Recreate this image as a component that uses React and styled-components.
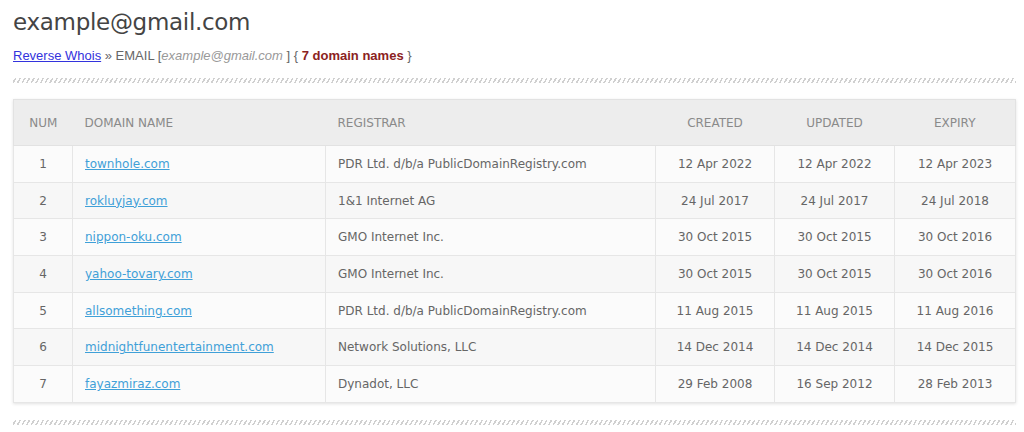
import styled, { createGlobalStyle } from 'styled-components'

const Global = createGlobalStyle`
  body {
    margin: 0;
    background: #ffffff;
    font-family: 'DejaVu Sans', Verdana, sans-serif;
  }
`

const Page = styled.div`
  padding: 7px 8px 0 13px;
  width: 1003px;
`

const Title = styled.h1`
  margin: 0;
  font-family: 'DejaVu Sans', Tahoma, sans-serif;
  font-weight: normal;
  font-size: 23px;
  line-height: 30px;
  color: #444444;
  letter-spacing: -0.3px;
`

const Crumbs = styled.div`
  margin-top: 11px;
  font-family: 'Liberation Sans', Arial, sans-serif;
  font-size: 13px;
  line-height: 16px;
  color: #666666;
`

const CrumbLink = styled.a`
  color: #3333dd;
  text-decoration: underline;
`

const Muted = styled.span`
  font-style: italic;
  color: #999999;
`

const Count = styled.span`
  font-weight: bold;
  color: #8b2222;
`

const Divider = styled.div`
  height: 5px;
  margin: ${p => p.$top}px 0 0;
  background: repeating-linear-gradient(
    -60deg,
    #d0d0d0 0,
    #d0d0d0 1.5px,
    transparent 1.5px,
    transparent 4px
  );
`

const Table = styled.table`
  margin-top: 16px;
  width: 100%;
  border-collapse: collapse;
  font-size: 12px;
  color: #555555;
  box-shadow: 0 1px 3px rgba(0, 0, 0, 0.12);
  border: 1px solid #e2e2e2;
`

const Th = styled.th`
  height: 45px;
  padding: 0 12px;
  background: #ededed;
  font-weight: normal;
  color: #8a8a8a;
  text-align: ${p => p.$align || 'center'};
  border-bottom: 1px solid #e2e2e2;
`

const Row = styled.tr`
  background: ${p => (p.$odd ? '#f7f7f7' : '#fbfbfb')};
`

const Td = styled.td`
  height: 35.7px;
  padding: 0 12px;
  text-align: ${p => p.$align || 'center'};
  border: 1px solid #e6e6e6;
  color: #666666;
  white-space: nowrap;
`

const Domain = styled.a`
  color: #3fa0d8;
  text-decoration: underline;
`

const rows = [
  ['townhole.com', 'PDR Ltd. d/b/a PublicDomainRegistry.com', '12 Apr 2022', '12 Apr 2022', '12 Apr 2023'],
  ['rokluyjay.com', '1&1 Internet AG', '24 Jul 2017', '24 Jul 2017', '24 Jul 2018'],
  ['nippon-oku.com', 'GMO Internet Inc.', '30 Oct 2015', '30 Oct 2015', '30 Oct 2016'],
  ['yahoo-tovary.com', 'GMO Internet Inc.', '30 Oct 2015', '30 Oct 2015', '30 Oct 2016'],
  ['allsomething.com', 'PDR Ltd. d/b/a PublicDomainRegistry.com', '11 Aug 2015', '11 Aug 2015', '11 Aug 2016'],
  ['midnightfunentertainment.com', 'Network Solutions, LLC', '14 Dec 2014', '14 Dec 2014', '14 Dec 2015'],
  ['fayazmiraz.com', 'Dynadot, LLC', '29 Feb 2008', '16 Sep 2012', '28 Feb 2013'],
]

export default function App() {
  return (
    <Page>
      <Global />
      <Title>example@gmail.com</Title>
      <Crumbs>
        <CrumbLink href="#">Reverse Whois</CrumbLink> » EMAIL [<Muted>example@gmail.com</Muted> ] {'{ '}
        <Count>7 domain names</Count> {'}'}
      </Crumbs>
      <Divider $top={14} />
      <Table>
        <colgroup>
          <col style={{ width: 59 }} />
          <col style={{ width: 253 }} />
          <col style={{ width: 330 }} />
          <col style={{ width: 119 }} />
          <col style={{ width: 120 }} />
          <col />
        </colgroup>
        <thead>
          <tr>
            <Th>NUM</Th>
            <Th $align="left">DOMAIN NAME</Th>
            <Th $align="left">REGISTRAR</Th>
            <Th>CREATED</Th>
            <Th>UPDATED</Th>
            <Th>EXPIRY</Th>
          </tr>
        </thead>
        <tbody>
          {rows.map((r, i) => (
            <Row key={r[0]} $odd={i % 2 === 1}>
              <Td>{i + 1}</Td>
              <Td $align="left">
                <Domain href="#">{r[0]}</Domain>
              </Td>
              <Td $align="left">{r[1]}</Td>
              <Td>{r[2]}</Td>
              <Td>{r[3]}</Td>
              <Td>{r[4]}</Td>
            </Row>
          ))}
        </tbody>
      </Table>
      <Divider $top={17} />
    </Page>
  )
}
